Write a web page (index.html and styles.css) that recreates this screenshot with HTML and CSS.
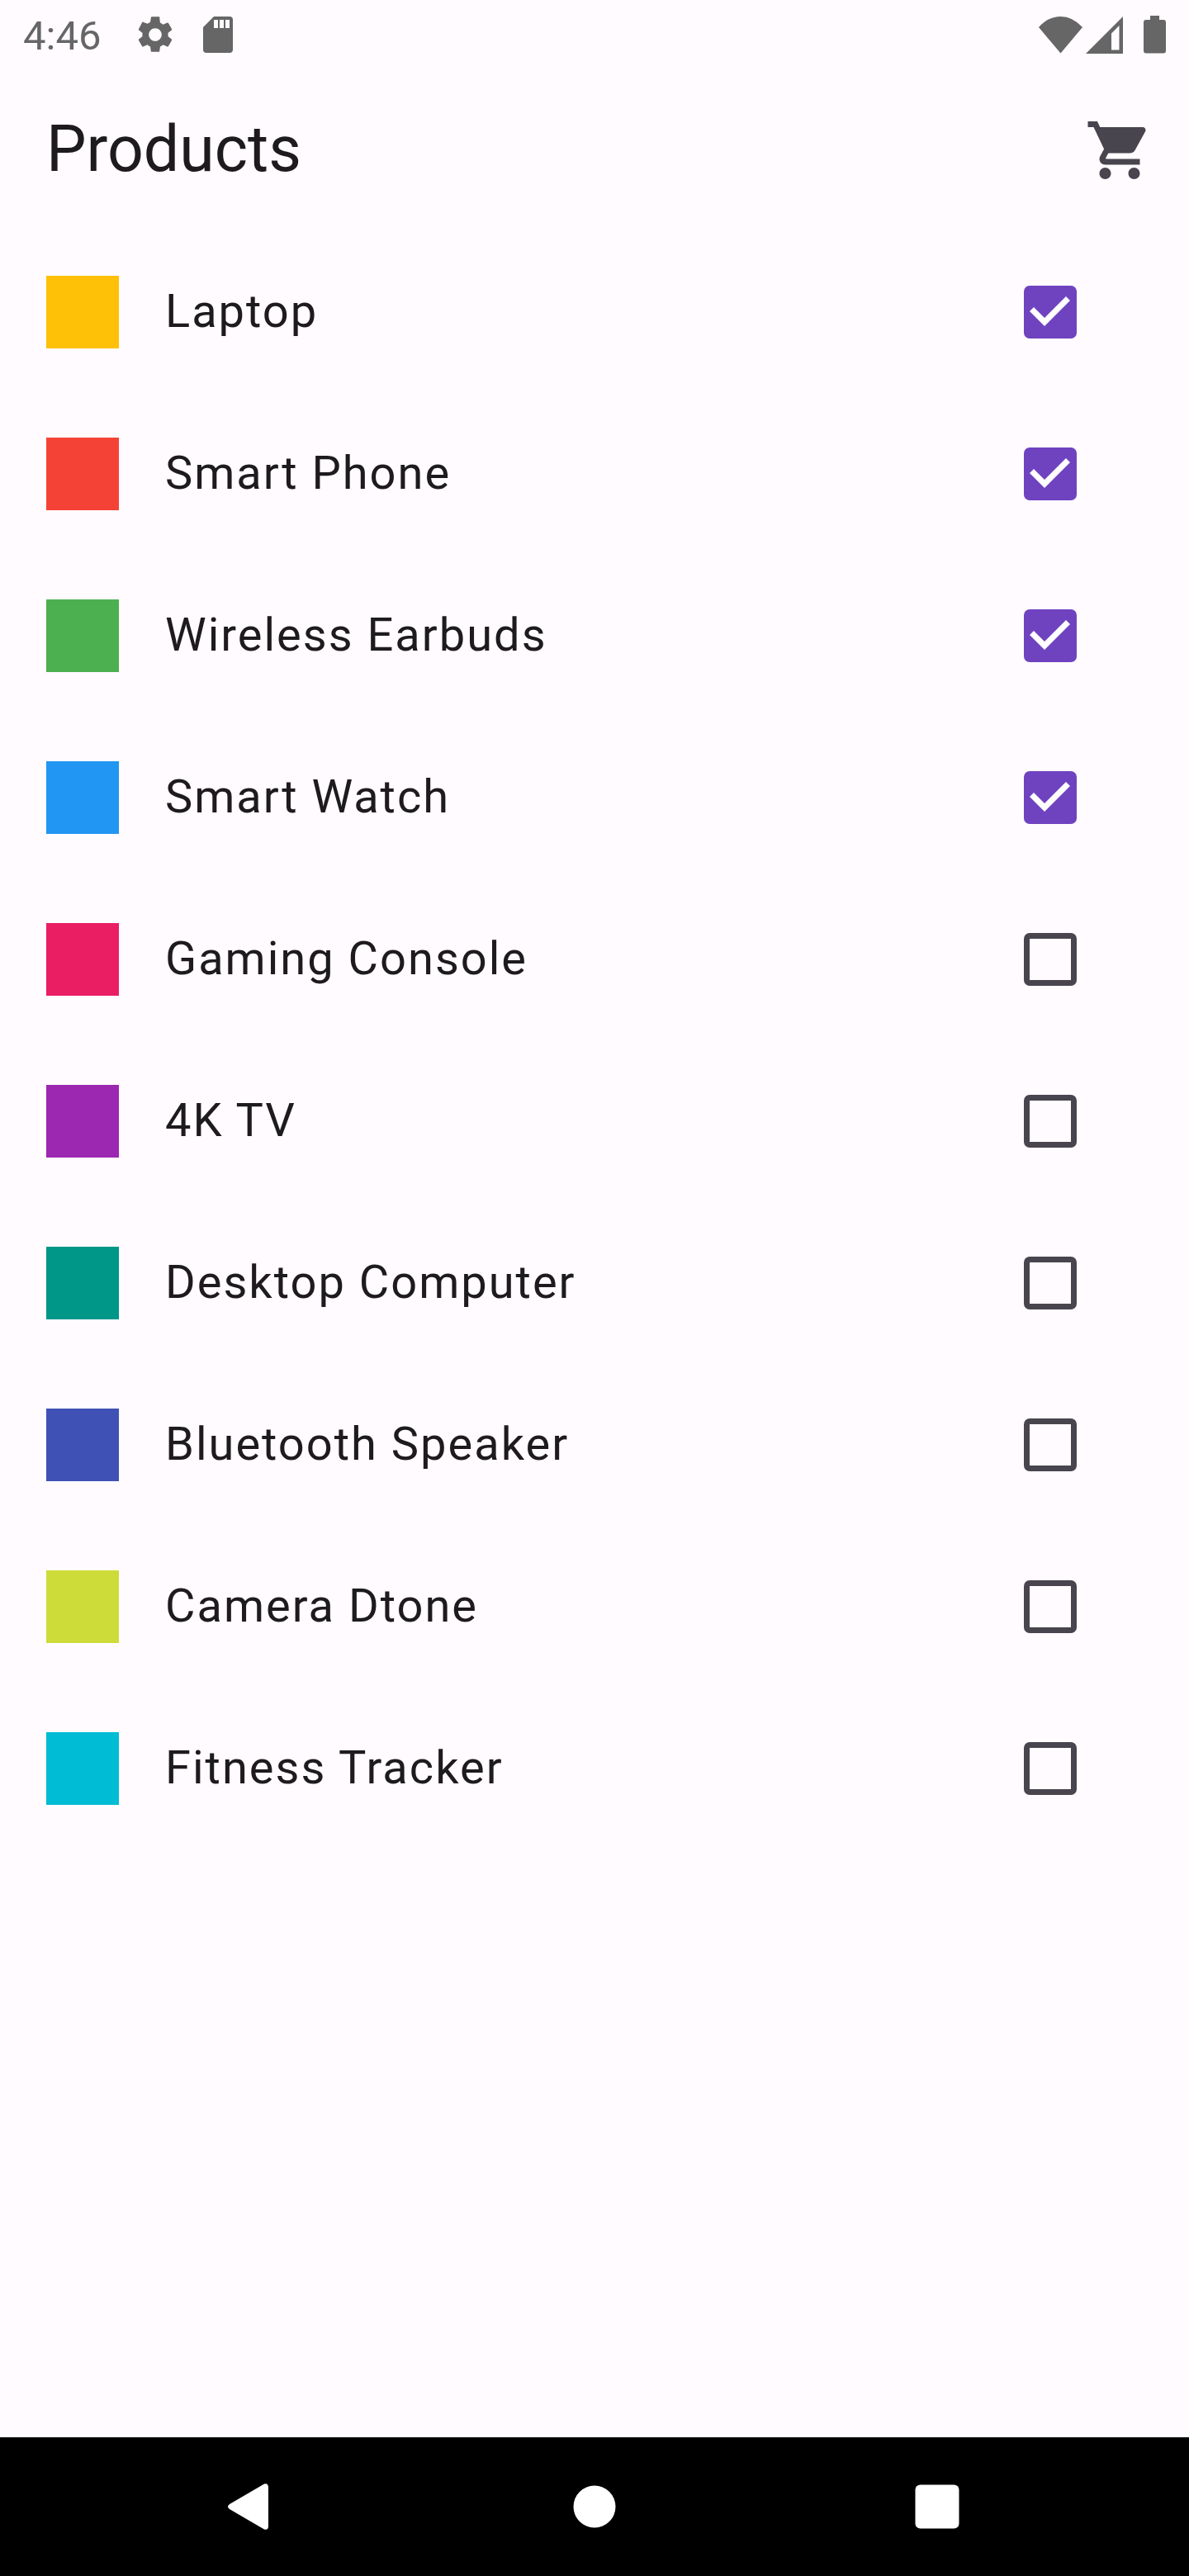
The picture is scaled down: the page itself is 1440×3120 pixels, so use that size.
FILE: index.html
```html
<!DOCTYPE html>
<html lang="en">
<head>
<meta charset="utf-8">
<meta name="viewport" content="width=device-width, initial-scale=1">
<title>Products</title>
<link rel="stylesheet" href="styles.css">
</head>
<body>
<div class="status-bar">
  <time class="clock">4:46</time>
  <div class="notifications">
    <svg class="status-icon" viewBox="0 0 24 24" aria-hidden="true"><path d="M19.14 12.94c.04-.3.06-.61.06-.94 0-.32-.02-.64-.07-.94l2.03-1.58a.49.49 0 0 0 .12-.61l-1.92-3.32a.488.488 0 0 0-.59-.22l-2.39.96c-.5-.38-1.03-.7-1.62-.94L14.4 2.81a.484.484 0 0 0-.48-.81h-3.84c-.24 0-.43.17-.47.41l-.36 2.54c-.59.24-1.13.57-1.62.94l-2.39-.96c-.22-.08-.47 0-.59.22L2.74 8.87c-.12.21-.08.47.12.61l2.03 1.58c-.05.3-.09.63-.09.94s.02.64.07.94l-2.03 1.58a.49.49 0 0 0-.12.61l1.92 3.32c.12.22.37.29.59.22l2.39-.96c.5.38 1.03.7 1.62.94l.36 2.54c.05.24.24.41.48.41h3.84c.24 0 .44-.17.47-.41l.36-2.54c.59-.24 1.13-.56 1.62-.94l2.39.96c.22.08.47 0 .59-.22l1.92-3.32c.12-.22.07-.47-.12-.61l-2.01-1.58zM12 15.6c-1.98 0-3.6-1.62-3.6-3.6s1.62-3.6 3.6-3.6 3.6 1.62 3.6 3.6-1.62 3.6-3.6 3.6z"/></svg>
    <svg class="status-icon" viewBox="0 0 52 52" aria-hidden="true"><path fill-rule="evenodd" d="M21 4H40Q44 4 44 8V44Q44 48 40 48H12Q8 48 8 44V17ZM21 8V18H26V8ZM28 8V18H33V8ZM35 8V18H40V8Z"/></svg>
  </div>
  <div class="system">
    <svg class="wifi" viewBox="0 0 53 45" aria-hidden="true"><path d="M0 13Q12 0 26.500 0T53 13L26.500 44.500Z"/></svg>
    <svg class="signal" viewBox="0 0 45 45" aria-hidden="true"><path fill-rule="evenodd" d="M45 0V45H0ZM40.500 11L31 20.500V40.500H40.500Z"/></svg>
    <svg class="battery" viewBox="0 0 27 46" aria-hidden="true"><path d="M8 0H19V5H24Q27 5 27 8V42.500Q27 45.500 24 45.500H3Q0 45.500 0 42.500V8Q0 5 3 5H8Z"/></svg>
  </div>
</div>
<header class="app-bar">
  <h1 class="title">Products</h1>
  <button class="cart-button" type="button" aria-label="Cart">
    <svg class="cart-icon" viewBox="0 0 24 24" aria-hidden="true"><path d="M7 18c-1.100 0-1.990.9-1.990 2S5.900 22 7 22s2-.9 2-2-.9-2-2-2zM1 2v2h2l3.600 7.590-1.350 2.450c-.16.28-.25.61-.25.96 0 1.100.9 2 2 2h12v-2H7.420c-.14 0-.25-.11-.25-.25l.03-.12.900-1.630h7.450c.75 0 1.410-.41 1.750-1.030l3.580-6.490c.08-.14.12-.31.12-.48 0-.55-.45-1-1-1H5.210l-.94-2H1zm16 16c-1.100 0-1.990.9-1.990 2s.89 2 1.990 2 2-.9 2-2-.9-2-2-2z"/></svg>
  </button>
</header>
<main class="content">
  <ul class="product-list">
    <li><label class="product"><span class="swatch amber"></span><span class="name">Laptop</span><input class="check" type="checkbox" checked></label></li>
    <li><label class="product"><span class="swatch red"></span><span class="name">Smart Phone</span><input class="check" type="checkbox" checked></label></li>
    <li><label class="product"><span class="swatch green"></span><span class="name">Wireless Earbuds</span><input class="check" type="checkbox" checked></label></li>
    <li><label class="product"><span class="swatch blue"></span><span class="name">Smart Watch</span><input class="check" type="checkbox" checked></label></li>
    <li><label class="product"><span class="swatch pink"></span><span class="name">Gaming Console</span><input class="check" type="checkbox"></label></li>
    <li><label class="product"><span class="swatch purple"></span><span class="name">4K TV</span><input class="check" type="checkbox"></label></li>
    <li><label class="product"><span class="swatch teal"></span><span class="name">Desktop Computer</span><input class="check" type="checkbox"></label></li>
    <li><label class="product"><span class="swatch indigo"></span><span class="name">Bluetooth Speaker</span><input class="check" type="checkbox"></label></li>
    <li><label class="product"><span class="swatch lime"></span><span class="name">Camera Dtone</span><input class="check" type="checkbox"></label></li>
    <li><label class="product"><span class="swatch cyan"></span><span class="name">Fitness Tracker</span><input class="check" type="checkbox"></label></li>
  </ul>
</main>
<nav class="nav-bar" aria-label="System navigation">
  <button class="nav-button" type="button" aria-label="Back"><svg class="nav-icon" viewBox="0 0 84 84" aria-hidden="true"><path d="M57 14.500Q61.500 13 62 18V66Q61.500 71 57 69.500L15 45Q11 42 15 39Z"/></svg></button>
  <button class="nav-button" type="button" aria-label="Home"><svg class="nav-icon" viewBox="0 0 84 84" aria-hidden="true"><circle cx="42" cy="42" r="25.500"/></svg></button>
  <button class="nav-button" type="button" aria-label="Recent apps"><svg class="nav-icon" viewBox="0 0 84 84" aria-hidden="true"><rect x="15.500" y="15.500" width="53" height="53" rx="6"/></svg></button>
</nav>
</body>
</html>
```
FILE: styles.css
```css
* {
  box-sizing: border-box;
}

body {
  margin: 0;
  min-height: 100vh;
  display: flex;
  flex-direction: column;
  background: #fffbff;
  color: #1d1b1e;
  font-family: Roboto, "Liberation Sans", sans-serif;
}

button {
  display: flex;
  align-items: center;
  justify-content: center;
  padding: 0;
  border: 0;
  background: none;
  cursor: pointer;
}

svg {
  display: block;
  fill: currentColor;
}

/* Status bar */
.status-bar {
  display: flex;
  align-items: center;
  height: 84px;
  padding: 0 28px;
  color: #666;
}

.clock {
  font-size: 49px;
  line-height: 56px;
  padding-top: 4px;
}

.notifications {
  display: flex;
  gap: 24px;
  margin-left: 40px;
}

.status-icon {
  width: 52px;
  height: 52px;
}

.system {
  display: flex;
  align-items: center;
  margin-left: auto;
}

.wifi {
  width: 53px;
  height: 45px;
}

.signal {
  width: 45px;
  height: 45px;
  margin-left: 4px;
}

.battery {
  width: 27px;
  height: 46px;
  margin-left: 25px;
}

/* App bar */
.app-bar {
  display: flex;
  align-items: center;
  justify-content: space-between;
  height: 196px;
  padding-left: 56px;
}

.title {
  margin: 0;
  padding-bottom: 2px;
  font-size: 77px;
  font-weight: 400;
  line-height: 98px;
}

.cart-button {
  width: 168px;
  height: 168px;
  color: #49454f;
}

.cart-icon {
  width: 84px;
  height: 84px;
}

/* Product list */
.content {
  flex: 1;
}

.product-list {
  margin: 0;
  padding: 0;
  list-style: none;
}

.product {
  display: flex;
  align-items: center;
  gap: 56px;
  height: 196px;
  padding: 0 136px 0 56px;
}

.swatch {
  width: 88px;
  height: 88px;
}

/* Body-large type style, with its standard tracking */
.name {
  flex: 1;
  padding-bottom: 2px;
  font-size: 56px;
  line-height: 84px;
  letter-spacing: 2px;
}

.check {
  appearance: none;
  display: grid;
  width: 64px;
  height: 64px;
  margin: 0;
  border: 7px solid #49454f;
  border-radius: 7px;
}

.check:checked {
  border: 0;
  background: #6f43c0;
}

.check:checked::before {
  content: "";
  background: #fff;
  clip-path: polygon(7px 31px, 12px 26px, 25px 39px, 51px 13px, 56px 18px, 25px 49px);
}

.amber { background: #ffc107; }
.red { background: #f44336; }
.green { background: #4caf50; }
.blue { background: #2196f3; }
.pink { background: #e91e63; }
.purple { background: #9c27b0; }
.teal { background: #009688; }
.indigo { background: #3f51b5; }
.lime { background: #cddc39; }
.cyan { background: #00bcd4; }

/* System navigation */
.nav-bar {
  display: flex;
  height: 168px;
  padding: 0 98px;
  background: #000;
  color: #fff;
}

.nav-button {
  flex: 1;
  color: inherit;
}

.nav-icon {
  width: 84px;
  height: 84px;
}
```
